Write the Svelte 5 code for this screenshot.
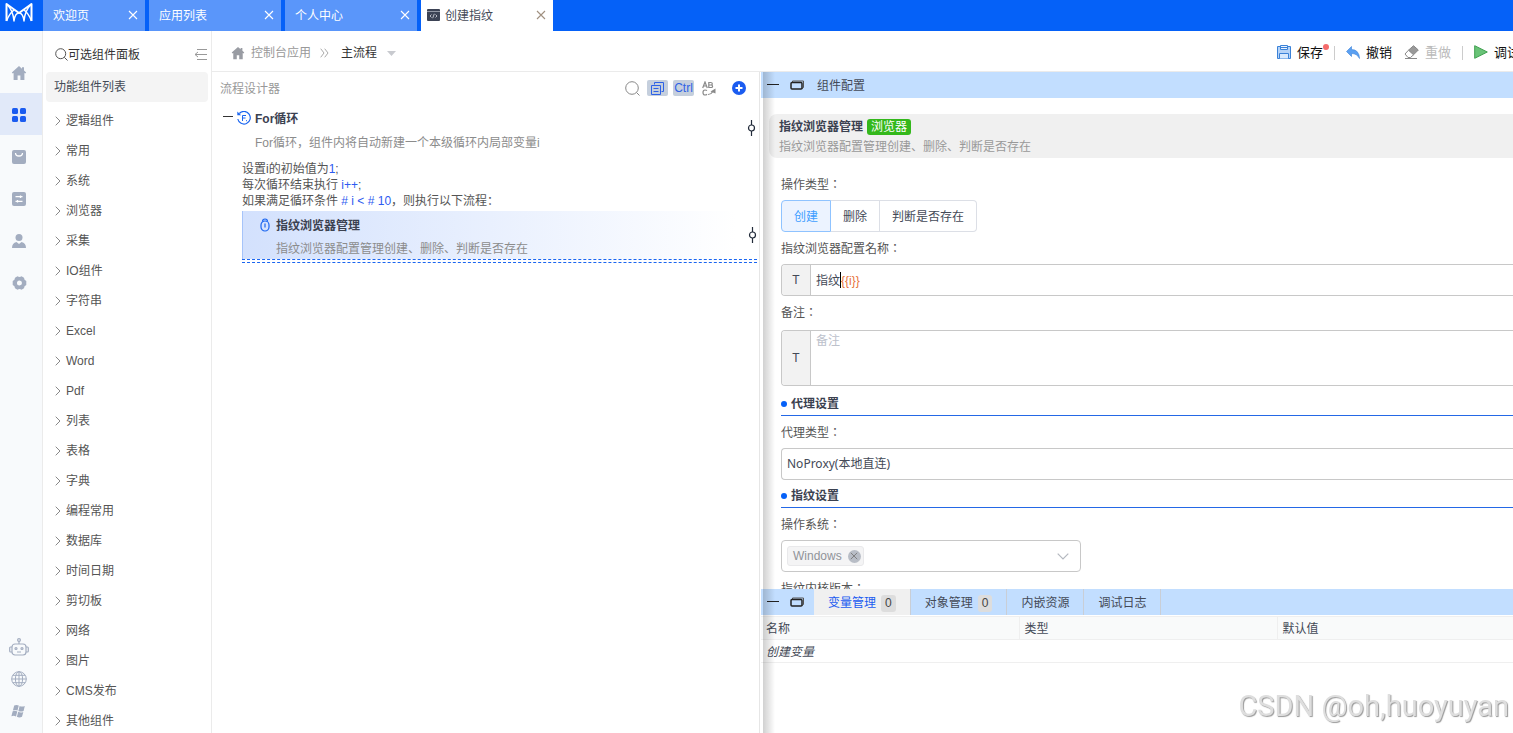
<script>
  const tabs = [
    { name: '欢迎页', size: 'short' },
    { name: '应用列表' },
    { name: '个人中心' },
    { name: '创建指纹', active: true }
  ];
  const groups = [
    '逻辑组件', '常用', '系统', '浏览器', '采集', 'IO组件', '字符串', 'Excel', 'Word', 'Pdf',
    '列表', '表格', '字典', '编程常用', '数据库', '时间日期', '剪切板', '网络', '图片', 'CMS发布', '其他组件'
  ];
  const modes = ['创建', '删除', '判断是否存在'];
  const infoTabs = [
    { name: '变量管理', count: 0 },
    { name: '对象管理', count: 0 },
    { name: '内嵌资源' },
    { name: '调试日志' }
  ];
  let mode = $state('创建');
  let infoTab = $state('变量管理');
  let prefix = $state('指纹');
  let token = $state('{{i}}');
  let remark = $state('');
</script>

{#snippet cross(size)}
  <svg width={size} height={size} viewBox="0 0 10 10" fill="none" stroke="currentColor" stroke-width="1.1"><path d="M1 1l8 8M9 1l-8 8" /></svg>
{/snippet}

{#snippet house(size)}
  <svg width={size} height={size} viewBox="0 0 16 16" fill="currentColor"><path d="M8 1L.8 7.4l1 1.1.8-.6V15h4v-4.500h2.800V15h4V7.900l.8.6 1-1.100-2.200-2V2.200h-2v1.500z" /></svg>
{/snippet}

{#snippet windowIcons()}
  <button class="plain" aria-label="收起"><svg width="12" height="12" viewBox="0 0 12 12"><path d="M0 5.500h12" stroke="#222" /></svg></button>
  <button class="plain" aria-label="还原">
    <svg width="14" height="12" viewBox="0 0 14 12" fill="none" stroke="#222"><path d="M2.500 3.500v-1.500h11v6.500l-1.500 1" stroke="#555" /><rect x="1" y="3.500" width="11" height="6.500" rx="1" stroke-width="1.500" /></svg>
  </button>
{/snippet}

{#snippet pin()}
  <svg class="pin" width="9" height="16" viewBox="0 0 9 16" fill="none" stroke="#222b3a" stroke-width="1.200"><path d="M4.500 0v5M4.500 11v5" /><circle cx="4.500" cy="8" r="3" /></svg>
{/snippet}

<div class="app">
  <header class="topbar">
    <div class="logo">
      <svg width="28" height="20" viewBox="0 0 28 20" fill="none" stroke="#fff" stroke-width="2" stroke-linejoin="round"><path d="M1.500 19V2l12.500 9L26.500 2v17" /><path d="M1.500 2Q8 8 9 19Q10 11 14 11T19 19Q20 8 26.500 2M1.500 19Q4 12 9 8M26.500 19Q24 12 19 8" stroke-width="1.500" /></svg>
    </div>
    <nav class="tabs">
      {#each tabs as tab}
        <div class="tab" class:active={tab.active} class:short={tab.size}>
          {#if tab.active}
            <svg width="13" height="12" viewBox="0 0 13 12"><rect width="13" height="12" rx="1" fill="#3c4355" /><path d="M0 2.500h13" stroke="#b9bdc8" stroke-width=".7" /><path d="M4.500 5.500l-1.500 1.500 1.500 1.500M8.500 5.500L10 7 8.500 8.500M7.300 4.800L5.700 9.200" fill="none" stroke="#d8dbe2" stroke-width=".8" /></svg>
          {/if}
          <a href="#tab">{tab.name}</a>
          <button class="plain close" aria-label="关闭">{@render cross(10)}</button>
        </div>
      {/each}
    </nav>
  </header>

  <div class="body">
    <aside class="rail">
      <button class="plain cell" aria-label="首页">{@render house(16)}</button>
      <button class="plain cell on" aria-label="应用">
        <svg width="14" height="14" viewBox="0 0 14 14" fill="currentColor"><rect width="6" height="6" rx="1.500" /><rect x="8" width="6" height="6" rx="1.500" /><rect y="8" width="6" height="6" rx="1.500" /><rect x="8" y="8" width="6" height="6" rx="1.500" /></svg>
      </button>
      <button class="plain cell" aria-label="市场">
        <svg width="14" height="14" viewBox="0 0 14 14"><rect width="14" height="14" rx="2" fill="currentColor" /><path d="M3.500 3q0 3 3.500 3t3.500-3" fill="none" stroke="#fff" stroke-width="1.300" /></svg>
      </button>
      <button class="plain cell" aria-label="任务">
        <svg width="14" height="14" viewBox="0 0 14 14"><rect width="14" height="14" rx="2" fill="currentColor" /><path d="M3.500 4.700h7M3.500 9.300h7" stroke="#fff" stroke-width="1.300" /><path d="M8.500 3.500v2.400M5.500 8.100v2.400" stroke="#fff" stroke-width="1.300" /></svg>
      </button>
      <button class="plain cell" aria-label="用户">
        <svg width="14" height="14" viewBox="0 0 14 14" fill="currentColor"><circle cx="7" cy="3.500" r="3.500" /><path d="M0 14q0-5 4.500-6L7 10l2.500-2q4.500 1 4.500 6z" /></svg>
      </button>
      <button class="plain cell" aria-label="设置">
        <svg width="15" height="14" viewBox="0 0 15 14"><path fill="currentColor" fill-rule="evenodd" d="M5.500.300Q7.500 1.500 9.500.300L12 1.700Q12 4 14.300 5V9Q12 10 12 12.300L9.500 13.700Q7.500 12.500 5.500 13.700L3 12.300Q3 10 .7 9V5Q3 4 3 1.700zM7.500 4.500a2.500 2.500 0 1 0 0 5 2.500 2.500 0 0 0 0-5z" /></svg>
      </button>
      <div class="rail-foot">
        <button class="plain cell" aria-label="助手">
          <svg width="20" height="18" viewBox="0 0 20 18" fill="none" stroke="currentColor" stroke-width="1.200"><rect x="3" y="6" width="14" height="11" rx="3" /><path d="M10 3v3M3 9H1.500Q.7 9 .7 10v3q0 1 .8 1H3M17 9h1.500q.8 0 .8 1v3q0 1-.8 1H17M8 14h4" /><circle cx="10" cy="2" r="1.400" /><circle cx="7" cy="10.500" r="1" /><circle cx="13" cy="10.500" r="1" /></svg>
        </button>
        <button class="plain cell" aria-label="网站">
          <svg width="16" height="16" viewBox="0 0 16 16" fill="none" stroke="currentColor"><circle cx="8" cy="8" r="7.300" /><ellipse cx="8" cy="8" rx="3.600" ry="7.300" /><path d="M8 .7v14.600M.7 8h14.600M2 4.300h12M2 11.700h12" /></svg>
        </button>
        <button class="plain cell" aria-label="Windows">
          <svg width="16" height="14" viewBox="0 0 16 14" fill="currentColor"><path d="M3.200 1.500Q5.500.300 7.800 1.600L6.500 6.600Q4.200 5.500 1.900 6.500zM8.600 2Q11 3.200 13.800 2L12.600 6.900Q10 8 7.400 6.900zM1.700 7.300Q4 6.300 6.300 7.400L5 12.400Q2.700 11.300.400 12.300zM7.200 7.800Q9.700 9 12.300 7.900L11 12.700Q8.500 14 5.900 12.800z" /></svg>
        </button>
      </div>
    </aside>

    <section class="library">
      <div class="library-head">
        <svg width="13" height="13" viewBox="0 0 13 13" fill="none" stroke="#555"><circle cx="5.700" cy="5.700" r="5" /><path d="M9.300 9.300L12.500 12.500" /></svg>
        <span>可选组件面板</span>
        <button class="plain fold" aria-label="折叠">
          <svg width="13" height="12" viewBox="0 0 13 12" fill="none" stroke="#999"><path d="M3 .5h10M1 5.500h12M3 10.500h10M4 3L1 5.500l3 2.500" /></svg>
        </button>
      </div>
      <div class="library-title">功能组件列表</div>
      <ul>
        {#each groups as g}
          <li>
            <svg width="6" height="10" viewBox="0 0 6 10" fill="none" stroke="#888"><path d="M.7.700L5 5 .7 9.300" /></svg>
            {g}
          </li>
        {/each}
      </ul>
    </section>

    <main>
      <div class="crumbs">
        <span class="crumb-home">{@render house(14)}</span>
        <a href="#apps" class="muted">控制台应用</a>
        <svg width="9" height="10" viewBox="0 0 9 10" fill="none" stroke="#aaa"><path d="M.7.700L4 5 .7 9.300M4.700.700L8 5 4.700 9.300" /></svg>
        <button class="plain flow">主流程
          <svg width="9" height="5" viewBox="0 0 9 5"><path d="M0 0h9L4.500 5z" fill="#c8cacf" /></svg>
        </button>
        <div class="tools">
          <button class="plain tool">
            <svg width="14" height="14" viewBox="0 0 14 14" fill="none" stroke="#3b82d8"><path d="M.5 1.500h13v12h-13z" fill="#b5d3f8" /><path d="M3.500.500h7v4h-7z" fill="#eaf3ff" /><path d="M2.500 13.500v-5h9v5M3.500 2.500h7" fill="#d8e9fd" /></svg>
            <span class="dirty">保存</span>
          </button>
          <i class="bar"></i>
          <button class="plain tool">
            <svg width="14" height="13" viewBox="0 0 14 13"><path d="M5.500.500v3Q13 3.500 13.500 12.500 11 7.500 5.500 7.500v3L.5 5.500z" fill="#5aa0f2" stroke="#3b82d8" stroke-width=".6" /></svg>
            <span>撤销</span>
          </button>
          <button class="plain tool off" disabled>
            <svg width="15" height="14" viewBox="0 0 15 14"><path d="M9.500.700L14.300 5 9.500 9.800 4.500 5.200z" fill="#999" stroke="#888" /><path d="M4.500 5.200L9.500 9.800 6.500 12.500H4L1 9z" fill="#fff" stroke="#888" /><path d="M1 13.500h12" stroke="#888" /></svg>
            <span>重做</span>
          </button>
          <i class="bar"></i>
          <button class="plain tool">
            <svg width="14" height="14" viewBox="0 0 14 14"><path d="M.7.700L13.300 7 .7 13.300z" fill="#69c377" stroke="#3f9f4f" /></svg>
            <span>调试</span>
          </button>
        </div>
      </div>

      <div class="work">
        <section class="designer">
          <div class="designer-head">
            <span>流程设计器</span>
            <div class="designer-tools">
              <button class="plain" aria-label="搜索"><svg width="15" height="15" viewBox="0 0 15 15" fill="none" stroke="#888"><circle cx="7" cy="7" r="6.300" /><path d="M11.500 11.500L14.500 14.500" /></svg></button>
              <button class="plain chip" aria-label="复制"><svg width="13" height="13" viewBox="0 0 13 13" fill="none" stroke="#2e62e6"><path d="M3.500 2.500v-2h9v9h-2" /><path d="M.5 3.500h9v9h-9zM2.500 6.500h5M2.500 9.500h5" /></svg></button>
              <button class="plain chip">Ctrl</button>
              <button class="plain" aria-label="重命名">
                <svg width="14" height="15" viewBox="0 0 14 15" fill="none" stroke="#8a8a8a" stroke-width="1.200"><path d="M.7 7L3 1l2.300 6M1.600 5h2.800M6.800 1v6M6.800 1.500h2q1.500 0 1.500 1.300T8.800 4h-2 2.300q1.500 0 1.500 1.300T9 6.500H6.800" /><path d="M5 9.500Q4.200 9 3 9 1 9 1 11.500T3 14q1.200 0 2-.7" /><path d="M6 13.500Q9 13.500 10.500 11" /><path d="M8.500 10.500L13.500 7.500V12.500z" fill="#8a8a8a" stroke="none" /></svg>
              </button>
              <button class="plain add" aria-label="添加"><svg width="14" height="14" viewBox="0 0 14 14"><circle cx="7" cy="7" r="7" fill="#1b5cf0" /><path d="M7 3.500v7M3.500 7h7" stroke="#fff" stroke-width="2" /></svg></button>
            </div>
          </div>

          <div class="loop">
            <div class="node">
              <svg class="minus" width="10" height="12" viewBox="0 0 10 12"><path d="M0 4.500h10" stroke="#333" /></svg>
              <svg width="14" height="14" viewBox="0 0 14 14" fill="none" stroke="#1b66f0" stroke-width="1.200"><path d="M2.300 2.500A6.300 6.300 0 1 1 .8 8" /><path d="M.3.500v3.800h3.800z" fill="#1b66f0" stroke="none" /><path d="M5.500 10V4.500h3.500M5.500 7h3M9 9.700h1" stroke-width="1" /></svg>
              <div class="node-text">
                <strong>For循环</strong>
                <p>For循环，组件内将自动新建一个本级循环内局部变量i</p>
              </div>
              {@render pin()}
            </div>
            <div class="code">
              <div>设置i的初始值为<b>1</b>;</div>
              <div>每次循环结束执行 <b>i++</b>;</div>
              <div>如果满足循环条件 <b># i &lt; # 10</b>，则执行以下流程：</div>
            </div>
            <div class="child">
              <svg width="10" height="14" viewBox="0 0 10 14" fill="none" stroke="#1b66f0" stroke-width="1.200"><rect x="1" y="3" width="8" height="10" rx="4" /><path d="M2.500 3.500Q2.500 1 5 1t2.500 2.500M5 5.500v4" /></svg>
              <div class="node-text">
                <strong>指纹浏览器管理</strong>
                <p>指纹浏览器配置管理创建、删除、判断是否存在</p>
              </div>
              {@render pin()}
            </div>
            <div class="drop"></div>
          </div>
        </section>

        <section class="inspector">
          <div class="strip">
            {@render windowIcons()}
            <span class="strip-title">组件配置</span>
          </div>
          <div class="config">
            <div class="about">
              <div><strong>指纹浏览器管理</strong><span class="badge">浏览器</span></div>
              <p>指纹浏览器配置管理创建、删除、判断是否存在</p>
            </div>
            <div class="form">
              <div class="label" id="mode-label">操作类型：</div>
              <div class="modes" role="group" aria-labelledby="mode-label">
                {#each modes as m}
                  <button class:picked={m === mode} onclick={() => (mode = m)}>{m}</button>
                {/each}
              </div>
              <label class="label" for="cfg-name">指纹浏览器配置名称：</label>
              <div class="field">
                <span class="type">T</span>
                <input id="cfg-name" class="lead" bind:value={prefix} />
                <i class="caret"></i>
                <input class="token" aria-label="变量" bind:value={token} />
              </div>
              <label class="label" for="cfg-note">备注：</label>
              <div class="field tall">
                <span class="type">T</span>
                <textarea id="cfg-note" placeholder="备注" bind:value={remark}></textarea>
              </div>
              <h3>代理设置</h3>
              <label class="label" for="cfg-proxy">代理类型：</label>
              <select id="cfg-proxy" class="proxy"><option>NoProxy(本地直连)</option></select>
              <h3>指纹设置</h3>
              <label class="label" for="cfg-os">操作系统：</label>
              <div class="os">
                <span class="tag">Windows <button class="plain" aria-label="移除">{@render cross(8)}</button></span>
                <select id="cfg-os"><option value=""></option></select>
                <svg width="12" height="7" viewBox="0 0 12 7" fill="none" stroke="#b4b8bf" stroke-width="1.200"><path d="M.7.700L6 6 11.300.700" /></svg>
              </div>
              <div class="label">指纹内核版本：</div>
            </div>
          </div>
          <div class="info">
            <div class="strip">
              {@render windowIcons()}
              <div class="info-tabs">
                {#each infoTabs as t}
                  <button class:picked={t.name === infoTab} onclick={() => (infoTab = t.name)}>
                    {t.name}{#if t.count !== undefined}<span class="count">{t.count}</span>{/if}
                  </button>
                {/each}
              </div>
            </div>
            <table>
              <thead><tr><th>名称</th><th>类型</th><th>默认值</th></tr></thead>
              <tbody><tr><td colspan="3">创建变量</td></tr></tbody>
            </table>
          </div>
        </section>
      </div>
    </main>
  </div>
  <div class="mark">CSDN @oh,huoyuyan</div>
</div>

<style>
  :global(body) { margin: 0; overflow: hidden; }
  .app {
    height: 100vh;
    display: flex;
    flex-direction: column;
    overflow: hidden;
    background: #fff;
    color: #444a57;
    font: 12px/16px "Liberation Sans", "Noto Sans CJK SC", sans-serif;
  }
  .app *, .app *::before { box-sizing: border-box; }
  svg { display: block; flex: none; }
  button, input, textarea, select { font: inherit; color: inherit; }
  .plain { border: 0; background: none; padding: 0; display: flex; align-items: center; justify-content: center; white-space: nowrap; flex: none; }
  p, ul, h3 { margin: 0; padding: 0; }
  a { color: inherit; text-decoration: none; }
  strong { font-weight: 700; color: #3b4150; }

  .topbar { flex: none; height: 31px; display: flex; background: #0561f8; }
  .logo { width: 43px; flex: none; padding: 2px 5px; }
  .tabs { display: flex; gap: 4px; }
  .tab { width: 132px; display: flex; align-items: center; gap: 5px; padding: 0 7px 0 10px; background: #5a96fa; color: #fff; }
  .tab > svg, .close { margin-bottom: 2px; }
  .tab.short { width: 102px; }
  .tab.active { background: #fff; color: #444a57; padding-left: 6px; }
  .close { margin-left: auto; width: 10px; height: 10px; }
  .tab.active .close { color: #a09080; }

  .body { flex: 1; min-height: 0; display: flex; }
  .rail { flex: none; width: 43px; padding: 20px 0 6px; display: flex; flex-direction: column; background: #f8fafc; border-right: 1px solid #ebebeb; color: #a3adc0; }
  .cell { height: 42px; padding: 2px 4px 0 0; }
  .cell.on { background: #e1e9f9; color: #1b5cf0; }
  .rail-foot { margin-top: auto; }
  .rail-foot .cell { width: 42px; height: 32px; padding-top: 0; }

  .library { flex: none; width: 169px; border-right: 1px solid #ebebeb; overflow: hidden; }
  .library-head { height: 41px; padding: 6px 4px 0 12px; display: flex; align-items: center; color: #333; }
  .fold { margin-left: auto; }
  .library-title { margin: 0 3px; height: 30px; line-height: 30px; padding-left: 8px; border-radius: 4px; background: #f4f4f4; }
  ul { list-style: none; padding-top: 4px; }
  li { height: 30px; padding-left: 12px; display: flex; align-items: center; gap: 5px; color: #555; }

  main { flex: 1; min-width: 0; display: flex; flex-direction: column; }
  .crumbs { flex: none; height: 41px; padding: 4px 0 0 19px; display: flex; align-items: center; border-bottom: 1px solid #ebebeb; }
  .crumb-home { color: #999ca3; margin-right: 6px; }
  .muted { color: #999; margin-right: 9px; }
  .flow { gap: 10px; margin-left: 12px; color: #333; }
  .tools { margin: 0 -7px 0 auto; display: flex; align-items: center; font-size: 13px; color: #111; }
  .tool { gap: 6px; }
  .tool svg { margin-bottom: 2px; }
  .off { color: #bbb; margin-left: 12px; }
  .bar { width: 1px; height: 14px; background: #ccc; margin: 0 11px; }
  .dirty { position: relative; }
  .dirty::after { content: ""; position: absolute; right: -6px; top: -1px; width: 6px; height: 6px; border-radius: 50%; background: #f56c6c; }

  .work { flex: 1; min-height: 0; display: grid; grid-template-columns: 549fr 752fr; }
  .designer { min-width: 0; border-right: 1px solid #e6e6e6; margin-right: 1px; }
  .designer-head { height: 32px; padding: 0 13px 0 8px; display: flex; align-items: center; justify-content: space-between; color: #999; }
  .designer-head > span { padding-top: 2px; }
  .designer-tools { display: flex; align-items: center; }
  .designer-tools .chip { width: 21px; height: 16px; border-radius: 2px; background: #c5cfdd; color: #2e62e6; }
  .designer-tools .chip { margin-left: 7px; }
  .designer-tools .chip + .chip { margin-left: 5px; }
  .designer-tools .chip + button:not(.chip) { margin-left: 8px; }
  .designer-tools .add { margin-left: 16px; }
  .loop { padding: 7px 2px 0 11px; }
  .node { display: flex; gap: 4px; padding-right: 1px; }
  .minus { margin-top: 1px; }
  .node-text { flex: 1; min-width: 0; }
  .node-text p { margin-top: 8px; color: #8c8c8c; }
  .node .pin, .child .pin { margin-top: 9px; }
  .code { margin: 10px 0 2px 19px; color: #555; }
  .code b { font-weight: 400; color: #2e5bf0; }
  .child { margin-left: 19px; height: 48px; padding: 7px 0 0 17px; display: flex; gap: 6px; border-left: 1px solid #a6c4fa; background: linear-gradient(90deg, #d3e1fd, #fff 96%); }
  .child .node-text p { margin-top: 7px; }
  .drop { margin-left: 19px; height: 4px; border: dashed #1b66f0; border-width: 1px 0; }

  .inspector { min-width: 0; min-height: 0; position: relative; display: flex; flex-direction: column; overflow: hidden; }
  .inspector::before { content: ""; position: absolute; z-index: 2; left: 2px; top: 0; bottom: 0; width: 12px; pointer-events: none; background: linear-gradient(90deg, rgba(0,0,0,.18), rgba(0,0,0,.12) 35%, rgba(0,0,0,0)); }
  .strip { flex: none; height: 26px; padding-left: 6px; display: flex; align-items: center; gap: 11px; background: #c2deff; }
  .strip-title { margin-left: 2px; padding-top: 1px; }
  .config { flex: 1; min-height: 0; overflow: hidden; padding: 16px 0 0 8px; }
  .about { height: 44px; padding: 5px 10px; border-radius: 8px 0 0 8px; background: #f0f0f0; }
  .about p { margin-top: 4px; color: #999; }
  .badge { display: inline-block; margin-left: 4px; padding: 0 4px; border-radius: 3px; background: #34b81c; color: #fff; }
  .form { padding: 18px 0 0 12px; }
  .label { display: block; height: 16px; padding-top: 1px; color: #555; font-family: "Liberation Sans", "Noto Sans CJK TC", sans-serif; }
  .modes { display: flex; margin: 8px 0; }
  .modes button { height: 32px; padding: 2px 12px 0; border: 1px solid #dcdfe6; border-left-width: 0; background: #fff; }
  .modes button:first-child { border-left-width: 1px; border-radius: 4px 0 0 4px; }
  .modes button:last-child { border-radius: 0 4px 4px 0; }
  .modes .picked { background: #ecf3ff; border-color: #8fc3ff; color: #409eff; }
  .field { display: flex; height: 32px; margin: 8px 0; border: 1px solid #c8c8c8; border-right: 0; border-radius: 4px 0 0 4px; overflow: hidden; }
  .field.tall { height: 56px; margin: 10px 0 9px; }
  .type { flex: none; width: 29px; display: flex; align-items: center; justify-content: center; background: #f2f2f2; border-right: 1px solid #c8c8c8; }
  .field input, textarea { border: 0; outline: 0; padding: 2px 0 0; background: none; }
  .field .lead { width: 29px; padding-left: 5px; }
  .caret { align-self: center; width: 1px; height: 16px; background: #000; }
  .field .token { flex: 1; min-width: 0; color: #e8743a; }
  textarea { flex: 1; padding: 2px 5px; resize: none; }
  textarea::placeholder { color: #bcc1cb; opacity: 1; }
  h3 { display: flex; align-items: center; gap: 4px; height: 21px; padding-bottom: 2px; margin-bottom: 8px; border-bottom: 1px solid #2468e6; font-size: 12px; color: #3b4150; }
  h3::before { content: ""; width: 6px; height: 6px; border-radius: 50%; background: #0561f8; }
  .proxy { display: block; width: 100%; height: 32px; margin: 8px 0 7px; padding: 0 5px; appearance: none; background: #fff; border: 1px solid #c8c8c8; border-right: 0; border-radius: 4px 0 0 4px; font-family: "Noto Sans", "Noto Sans CJK SC", sans-serif; }
  .os { width: 300px; height: 32px; margin: 8px 0; padding: 0 11px 0 5px; display: flex; align-items: center; border: 1px solid #c8c8c8; border-radius: 4px; }
  .os select { flex: 1; min-width: 0; border: 0; background: none; appearance: none; }
  .tag { display: flex; align-items: center; gap: 6px; height: 20px; padding: 0 2px 0 5px; border: 1px solid #e9e9eb; border-radius: 3px; background: #f4f4f5; color: #909399; }
  .tag button { width: 13px; height: 13px; border-radius: 50%; background: #b8bdc6; color: #777; }

  .info { flex: none; height: 144px; background: #fff; }
  .info-tabs { display: flex; align-self: stretch; margin-left: -1px; }
  .info-tabs button { display: flex; align-items: center; border: 0; border-right: 1px solid #c9ced6; padding: 2px 14px 0; background: none; }
  .info-tabs .picked { background: #f0f0f0; color: #1b5cf0; }
  .count { margin-left: 5px; padding: 0 4px; border-radius: 3px; background: #ddd; color: #444; line-height: 17px; }
  table { width: 100%; table-layout: fixed; border-collapse: collapse; margin-top: 1px; }
  th, td { height: 23px; padding: 1px 5px 0; text-align: left; font-weight: 400; border-bottom: 1px solid #efefef; }
  th { width: 258px; background: #f9fafa; border-top: 1px solid #efefef; border-right: 1px solid #efefef; }
  th:last-child { width: auto; border-right: 0; }
  td { font-style: italic; }

  .mark { position: fixed; z-index: 3; right: 4px; bottom: 9px; font: 29px/36px Roboto, sans-serif; color: #dedede; text-shadow: 1px 1px 1px #999; pointer-events: none; }
</style>
